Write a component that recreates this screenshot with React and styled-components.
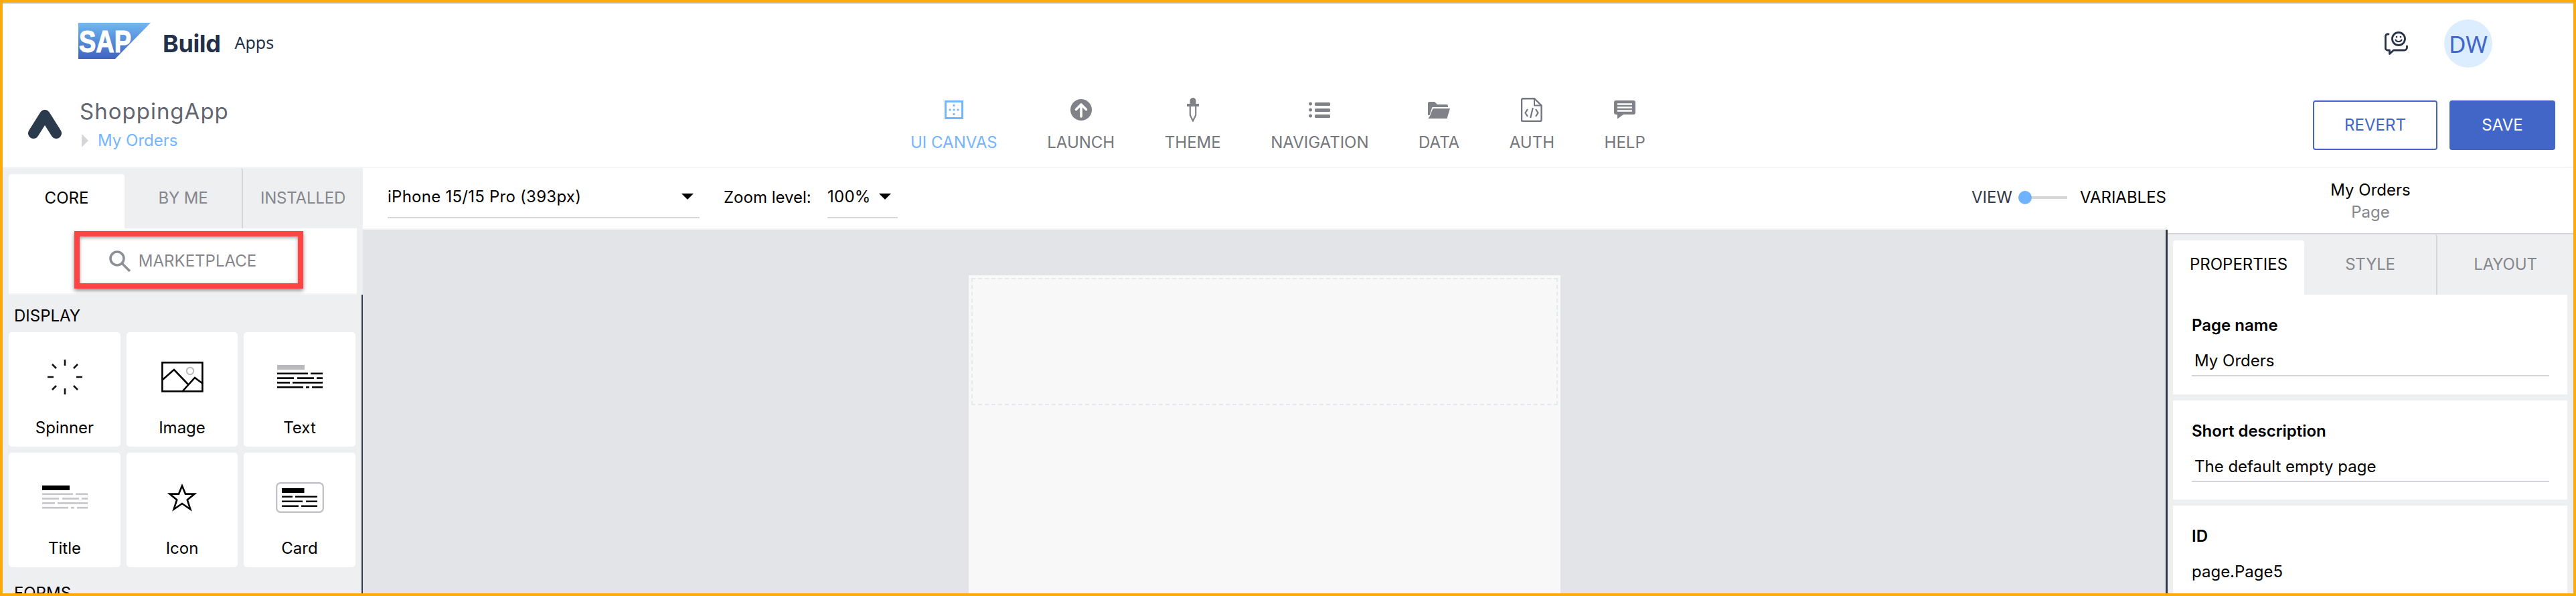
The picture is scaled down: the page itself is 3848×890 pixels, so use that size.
import React from "react";
import styled, { createGlobalStyle } from "styled-components";

const Global = createGlobalStyle`
  html, body { margin: 0; padding: 0; background: #fff; }
  * { box-sizing: border-box; }
`;

const FONT = `Inter, "Liberation Sans", sans-serif`;

const Frame = styled.div`
  width: 3848px; height: 890px; border: 4px solid #fdab0a; overflow: hidden;
  display: flex; flex-direction: column; background: #fff;
  font-family: ${FONT}; font-size: 24px; color: #000;
`;
const BrandBar = styled.header`
  height: 120px; flex: none; border-top: 2px solid #dcdcdf;
  display: flex; align-items: center; padding: 0 121px 0 113px;
`;
const SapLogo = styled.svg`width: 108px; height: 54px; flex: none; margin-bottom: 8px;`;
const BuildText = styled.span`
  margin-left: 18px; font-family: Inter, sans-serif; font-size: 36px; font-weight: 700; color: #223049; letter-spacing: -0.4px;
`;
const AppsText = styled.span`
  margin-left: 21px; margin-bottom: 4px; font-family: "Noto Sans", sans-serif; font-size: 25px; color: #223049;
`;
const BrandRight = styled.div`margin-left: auto; display: flex; align-items: center; gap: 54px;`;
const Avatar = styled.div`
  width: 72px; height: 72px; border-radius: 50%; background: #dbedff; color: #3f66cc;
  display: flex; align-items: center; justify-content: center; font-family: "Noto Sans", sans-serif; font-size: 35px;
`;

const AppBar = styled.div`
  height: 127px; flex: none; border-bottom: 2px solid #f5f5f6;
  display: flex; align-items: center; padding-right: 27px;
`;
const AppId = styled.div`width: 1356px; flex: none; display: flex; align-items: flex-start; padding: 22px 0 0 38px; align-self: flex-start;`;
const AppLogo = styled.svg`width: 50px; height: 46px; margin-top: 17px; flex: none;`;
const AppNames = styled.div`margin-left: 27px; display: flex; flex-direction: column;`;
const AppName = styled.div`font-size: 33px; line-height: 40px; color: #62656e; letter-spacing: 1px;`;
const Crumb = styled.div`display: flex; align-items: center; margin-top: 9px; line-height: 30px; color: #74b5ff; font-size: 24px;`;
const CrumbArrow = styled.i`
  width: 0; height: 0; margin: 0 14px 0 3px; border-left: 10px solid #d5d5da;
  border-top: 10px solid transparent; border-bottom: 10px solid transparent;
`;
const Nav = styled.nav`display: flex; gap: 74.6px; align-self: flex-start; padding-top: 22px;`;
const NavItem = styled.div`
  display: flex; flex-direction: column; align-items: center;
  color: ${p => (p.$active ? "#74b5ff" : "#75777d")};
`;
const NavIcon = styled.div`height: 36px; display: flex; align-items: center; justify-content: center;`;
const NavLabel = styled.div`margin-top: 16px; line-height: 30px; white-space: nowrap;`;
const Actions = styled.div`margin-left: auto; display: flex; gap: 18px;`;
const Button = styled.button`
  height: 74px; width: ${p => p.$w}px; border-radius: 4px; border: 2px solid #4166c8;
  background: ${p => (p.$solid ? "#4166c8" : "#fff")}; color: ${p => (p.$solid ? "#fff" : "#4166c8")};
  font-family: ${FONT}; font-size: 24px; font-weight: 400; padding: 0;
`;

const Work = styled.main`flex: 1; min-height: 0; display: flex;`;

const Left = styled.aside`width: 538px; flex: none; background: #eeeff1; overflow: hidden; position: relative;`;
const TabRow = styled.div`display: flex; flex: none; height: ${p => p.$h}px; padding: 9px 0 0 ${p => p.$pad}px; background: #eeeff1;`;
const Tab = styled.div`
  width: ${p => p.$w}px; flex: ${p => (p.$grow ? 1 : "none")}; display: flex; justify-content: center; padding-top: 21px;
  line-height: 30px; border-radius: 4px 4px 0 0; letter-spacing: ${p => (p.$active ? 0 : "-0.2px")};
  background: ${p => (p.$active ? "#fff" : "transparent")};
  color: ${p => (p.$active ? "#000" : "#85878d")};
  ${p => (p.$divider ? "border-right: 2px solid #d5d5da; margin-top: -9px; padding-top: 30px;" : "")}
`;
const SearchBar = styled.div`
  position: relative; height: 97px; margin: 0 9px; background: #fff;
  display: flex; align-items: center; justify-content: center; gap: 12px; color: #85878d;
`;
const SearchLine = styled.div`height: 2px; margin: 0 9px; background: #f5f5f6;`;
const Annotation = styled.div`
  position: absolute; left: 98px; top: 4px; width: 342px; height: 86px; border: 8px solid #ff4444;
  box-shadow: 0 3px 6px rgba(0,0,0,.45), inset 0 2px 5px rgba(0,0,0,.4);
`;
const SideRule = styled.div`position: absolute; right: 0; top: 189px; bottom: 0; width: 2px; background: #32394a;`;
const SectionTitle = styled.div`padding: 0 0 0 17px; line-height: 30px; height: 30px; margin-top: ${p => p.$mt}px; white-space: nowrap;`;
const Grid = styled.div`display: grid; grid-template-columns: 167px 166px 167px; gap: 9px; margin: 9px 0 0 9px; grid-auto-rows: 171px;`;
const Card = styled.div`background: #fff; border-radius: 5px; display: flex; flex-direction: column; align-items: center; padding-top: 6px;`;
const CardIcon = styled.div`height: 122px; display: flex; align-items: center; justify-content: center;`;
const CardLabel = styled.div`line-height: 30px;`;

const Center = styled.section`width: 2696px; flex: none; display: flex; flex-direction: column;`;
const Toolbar = styled.div`
  height: 92px; flex: none; border-bottom: 2px solid #f5f5f6; background: #fff;
  display: flex; align-items: flex-start; padding: 0 2px 0 37px;
`;
const Select = styled.div`
  width: ${p => p.$w}px; height: 75px; border-bottom: 2px solid #d5d5da; flex: none;
  display: flex; align-items: flex-start; justify-content: space-between; padding: 28px ${p => p.$pr}px 0 0; line-height: 30px; letter-spacing: 0.25px;
`;
const Caret = styled.i`
  width: 0; height: 0; margin-top: 10px; border-top: 9px solid #000;
  border-left: 9px solid transparent; border-right: 9px solid transparent;
`;
const ZoomLabel = styled.div`margin: 29px 0 0 36px; width: 155px; line-height: 30px; white-space: nowrap;`;
const ToggleWrap = styled.div`margin-left: auto; display: flex; align-items: center; padding-top: 29px;`;
const ToggleText = styled.div`line-height: 30px; color: ${p => p.$c};`;
const Track = styled.div`position: relative; width: 73px; height: 4px; background: #d6d6db; margin: 0 19px 0 9px;`;
const Knob = styled.i`position: absolute; left: 0; top: -8px; width: 20px; height: 20px; border-radius: 50%; background: #6eb3ff;`;
const Canvas = styled.div`
  flex: 1; min-height: 0; background: #e3e4e8; border-right: 3px solid #32394a;
  display: flex; justify-content: center; padding-top: 68px;
`;
const Page = styled.div`width: 884px; background: #f8f8f8; padding: 4px;`;
const DropZone = styled.div`height: 190px; border: 2px dashed #e5e8ec;`;

const Right = styled.aside`flex: 1; min-width: 0; display: flex; flex-direction: column; background: #eeeff1; overflow: hidden;`;
const RightHead = styled.div`
  height: 99px; flex: none; background: #fff; border-bottom: 2px solid #d5d5da;
  display: flex; flex-direction: column; align-items: center; padding: 18px 0 0 0;
`;
const HeadTitle = styled.div`line-height: 30px;`;
const HeadSub = styled.div`line-height: 30px; margin-top: 3px; color: #85878d;`;
const PanelCard = styled.div`
  margin: 0 9px ${p => p.$mb}px 8px; background: #fff; padding: 31px 28px 0 28px; height: ${p => p.$h}px; flex: none;
`;
const FieldLabel = styled.div`font-weight: 600; line-height: 30px; font-size: 24px;`;
const FieldValue = styled.div`
  margin-top: 23px; line-height: 30px; padding: 0 0 6px ${p => (p.$plain ? 0 : 4)}px; white-space: nowrap;
  ${p => (p.$plain ? "" : "border-bottom: 2px solid #d5d5da; margin-right: -1px;")}
`;

const Bars = ({ bar, line, barW = 41 }) => {
  const rows = [
    [[0, 46], [50, 68]],
    [[0, 25], [30, 55], [59, 68]],
    [[0, 19], [23, 68]],
    [[0, 39], [43, 48], [52, 68]],
  ];
  return (
    <g>
      <rect width={barW} height="7" fill={bar} />
      {rows.map((r, i) =>
        r.map(([a, b]) => <rect key={`${i}-${a}`} x={a} y={11.5 + i * 6.8} width={b - a} height="2.6" fill={line} />)
      )}
    </g>
  );
};

const SpinnerIcon = () => (
  <svg width="54" height="54" viewBox="-27 -27 54 54" stroke="#111" strokeWidth="2.6" fill="none">
    <path d="M0-26V-17M0 26V17M-26 0H-17M26 0H17M-13-13L-19-19M13-13L19-19M-13 13L-19 19M13 13L19 19" />
  </svg>
);
const ImageIcon = () => (
  <svg width="63" height="46" viewBox="0 0 63 46" fill="none" stroke="#000" strokeWidth="2.6">
    <rect x="1.4" y="1.4" width="60" height="43" />
    <path d="M2 27L19 12L40 34M31 45L50 24L62 33" />
    <circle cx="43" cy="14" r="5.2" stroke="#b8b8bd" strokeWidth="2" />
  </svg>
);
const TextIcon = () => <svg width="68" height="36" viewBox="0 0 68 36"><Bars bar="#b9b9be" line="#000" /></svg>;
const TitleIcon = () => <svg width="68" height="36" viewBox="0 0 68 36"><Bars bar="#000" line="#c4c4c9" /></svg>;
const StarIcon = () => (
  <svg width="44" height="42" viewBox="0 0 44 42" fill="none" stroke="#000" strokeWidth="2.6">
    <path d="M22 3.5L27 15.6H40.5L29.8 24.5L34.4 38.5L22 30L9.6 38.5L14.2 24.5L3.5 15.6H17Z" />
  </svg>
);
const CardGlyph = () => (
  <svg width="72" height="46" viewBox="0 0 72 46">
    <rect x="1.2" y="1.2" width="69.6" height="43.6" rx="6" fill="none" stroke="#c2c3c8" strokeWidth="2.4" />
    <rect x="9" y="9" width="33.5" height="7" />
    {[[[9, 25], [29, 62]], [[9, 40], [45, 62]], [[9, 34], [38, 62]]].map((r, i) =>
      r.map(([a, b]) => <rect key={`${i}-${a}`} x={a} y={20.5 + i * 7} width={b - a} height="2.4" />)
    )}
  </svg>
);
const SearchIcon = () => (
  <svg width="32" height="32" viewBox="0 0 32 32" fill="none" stroke="#8d9096" strokeWidth="3.6">
    <circle cx="12" cy="12" r="10" />
    <path d="M19 19L31 31" />
  </svg>
);

const CanvasIcon = () => (
  <svg width="28" height="28" viewBox="0 0 28 28" fill="#74b5ff">
    <rect x="1.5" y="1.5" width="25" height="25" fill="none" stroke="#74b5ff" strokeWidth="3" />
    {[[14, 7.5], [8, 14], [14, 14], [20, 14], [14, 20.5]].map(([x, y]) => <rect key={`${x}${y}`} x={x - 1.5} y={y - 1.5} width="3" height="3" rx="1" />)}
  </svg>
);
const LaunchIcon = () => (
  <svg width="32" height="32" viewBox="0 0 32 32">
    <circle cx="16" cy="16" r="16" fill="#808287" />
    <path d="M16 26V9M8.5 15.5L16 8L23.5 15.5" fill="none" stroke="#fff" strokeWidth="3.6" strokeLinecap="round" strokeLinejoin="round" />
  </svg>
);
const DropperIcon = () => (
  <svg width="18" height="36" viewBox="0 0 18 36" fill="#808287">
    <path d="M4.5 9V4.5a4.5 4.5 0 0 1 9 0V9H18V13H0V9Z" />
    <path d="M4.8 13V26L9 34.6L13.2 26V13" fill="none" stroke="#808287" strokeWidth="2.2" />
  </svg>
);
const ListIcon = () => (
  <svg width="32" height="24" viewBox="0 0 32 24" fill="#808287">
    {[2, 11, 20].map(y => (
      <g key={y}>
        <circle cx="2.5" cy={y + 1} r="2.5" />
        <rect x="9" y={y - 1} width="23" height="5" rx="1.5" />
      </g>
    ))}
  </svg>
);
const FolderIcon = () => (
  <svg width="33" height="25" viewBox="0 0 33 25" fill="#808287">
    <path d="M0 2a2 2 0 0 1 2-2H10L14 4H28a2 2 0 0 1 2 2V8H6.5L2.5 20H0Z" />
    <path d="M7.5 10H33L28.5 25H0.5L3 21Z" />
  </svg>
);
const AuthIcon = () => (
  <svg width="32" height="36" viewBox="0 0 32 36" fill="none" stroke="#737580" strokeWidth="2.4">
    <path d="M20 1.2H3a2 2 0 0 0-2 2V33a2 2 0 0 0 2 2H28.6a2 2 0 0 0 2-2V11.5Z" />
    <path d="M20 1.2V11.5H30.6" strokeWidth="2" />
    <path d="M10 17L6.5 22.5L10 28M22 17L25.5 22.5L22 28M17.8 15L14.2 30" strokeWidth="2.2" />
  </svg>
);
const HelpIcon = () => (
  <svg width="32" height="28" viewBox="0 0 32 28">
    <path d="M3 0H29a3 3 0 0 1 3 3V18a3 3 0 0 1-3 3H14L5 27.5V21H3a3 3 0 0 1-3-3V3A3 3 0 0 1 3 0Z" fill="#808287" />
    <path d="M5 5.5H27M5 10.5H27M5 15.5H27" stroke="#fff" strokeWidth="2.4" />
  </svg>
);

const NAV = [
  ["UI CANVAS", <CanvasIcon />, true],
  ["LAUNCH", <LaunchIcon />],
  ["THEME", <DropperIcon />],
  ["NAVIGATION", <ListIcon />],
  ["DATA", <FolderIcon />],
  ["AUTH", <AuthIcon />],
  ["HELP", <HelpIcon />],
];

const WIDGETS = [
  ["Spinner", <SpinnerIcon />],
  ["Image", <ImageIcon />],
  ["Text", <TextIcon />],
  ["Title", <TitleIcon />],
  ["Icon", <StarIcon />],
  ["Card", <CardGlyph />],
];

export default function App() {
  return (
    <Frame>
      <Global />
      <BrandBar>
        <SapLogo viewBox="0 0 108 54">
          <defs>
            <linearGradient id="sapg" x1="0" y1="0" x2="0" y2="1">
              <stop offset="0" stopColor="#6fb8f0" />
              <stop offset="1" stopColor="#3f63c0" />
            </linearGradient>
          </defs>
          <polygon points="0,0 108,0 55,54 0,54" fill="url(#sapg)" />
          <text x="1" y="44" fontFamily="Liberation Sans" fontWeight="700" fontSize="47" fill="#fff" stroke="#fff" strokeWidth="1.2" textLength="78" lengthAdjust="spacingAndGlyphs">SAP</text>
        </SapLogo>
        <BuildText>Build</BuildText>
        <AppsText>Apps</AppsText>
        <BrandRight>
          <svg width="36" height="36" viewBox="0 0 36 36" fill="none" stroke="#273249" strokeWidth="2.8" strokeLinecap="round">
            <circle cx="22" cy="11" r="9.5" />
            <path d="M7 4H5.5A3 3 0 0 0 2.5 7V25A3 3 0 0 0 5.5 28H8.5V33.5L14.5 28H30A4 4 0 0 0 34.5 24V22" strokeLinejoin="round" />
            <path d="M17.5 12.5C19 16 25 16 26.5 12.5" strokeWidth="2" />
            <path d="M19 8V8.2M25 8V8.2" strokeWidth="2.6" />
          </svg>
          <Avatar>DW</Avatar>
        </BrandRight>
      </BrandBar>
      <AppBar>
        <AppId>
          <AppLogo viewBox="0 0 50 46">
            <path d="M25 9L8 36M25 9L42 36" stroke="#2b3a4d" strokeWidth="16" strokeLinecap="round" fill="none" />
          </AppLogo>
          <AppNames>
            <AppName>ShoppingApp</AppName>
            <Crumb><CrumbArrow />My Orders</Crumb>
          </AppNames>
        </AppId>
        <Nav>
          {NAV.map(([label, icon, active]) => (
            <NavItem key={label} $active={active}>
              <NavIcon>{icon}</NavIcon>
              <NavLabel>{label}</NavLabel>
            </NavItem>
          ))}
        </Nav>
        <Actions>
          <Button $w={186}>REVERT</Button>
          <Button $w={158} $solid>SAVE</Button>
        </Actions>
      </AppBar>
      <Work>
        <Left>
          <TabRow $h={90} $pad={9}>
            <Tab $w={173} $active>CORE</Tab>
            <Tab $w={177} $divider>BY ME</Tab>
            <Tab $grow>INSTALLED</Tab>
          </TabRow>
          <SearchBar>
            <SearchIcon />
            <span>MARKETPLACE</span>
            <Annotation />
          </SearchBar>
          <SearchLine />
          <SideRule />
          <SectionTitle $mt={17}>DISPLAY</SectionTitle>
          <Grid>
            {WIDGETS.map(([label, icon]) => (
              <Card key={label}>
                <CardIcon>{icon}</CardIcon>
                <CardLabel>{label}</CardLabel>
              </Card>
            ))}
          </Grid>
          <SectionTitle $mt={24}>FORMS</SectionTitle>
        </Left>
        <Center>
          <Toolbar>
            <Select $w={466} $pr={9}>iPhone 15/15 Pro (393px)<Caret /></Select>
            <ZoomLabel>Zoom level:</ZoomLabel>
            <Select $w={105} $pr={10}>100%<Caret /></Select>
            <ToggleWrap>
              <ToggleText $c="#33394b">VIEW</ToggleText>
              <Track><Knob /></Track>
              <ToggleText $c="#000">VARIABLES</ToggleText>
            </ToggleWrap>
          </Toolbar>
          <Canvas>
            <Page><DropZone /></Page>
          </Canvas>
        </Center>
        <Right>
          <RightHead>
            <HeadTitle>My Orders</HeadTitle>
            <HeadSub>Page</HeadSub>
          </RightHead>
          <TabRow $h={90} $pad={8}>
            <Tab $w={196} $active>PROPERTIES</Tab>
            <Tab $w={199} $divider>STYLE</Tab>
            <Tab $grow>LAYOUT</Tab>
          </TabRow>
          <PanelCard $h={149} $mb={9}>
            <FieldLabel>Page name</FieldLabel>
            <FieldValue>My Orders</FieldValue>
          </PanelCard>
          <PanelCard $h={148} $mb={9}>
            <FieldLabel>Short description</FieldLabel>
            <FieldValue>The default empty page</FieldValue>
          </PanelCard>
          <PanelCard $h={140} $mb={0}>
            <FieldLabel>ID</FieldLabel>
            <FieldValue $plain>page.Page5</FieldValue>
          </PanelCard>
        </Right>
      </Work>
    </Frame>
  );
}
